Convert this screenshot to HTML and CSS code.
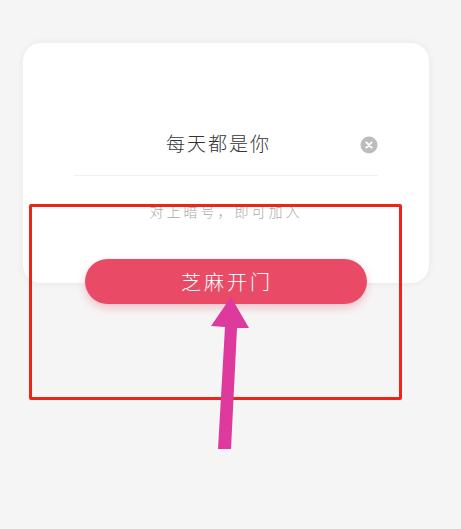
FILE: index.html
```html
<!DOCTYPE html>
<html>
  <head>
    <title>芝麻开门</title>
    <link rel="stylesheet" href="styles.css">
  </head>
  <body>
    <div class="card">
      <div class="code-row">
        <span class="code">每天都是你</span>
        <span class="clear">
          <svg viewBox="0 0 18 18" width="18" height="18">
            <circle cx="9" cy="9" r="8.5" fill="#bcbcbc"/>
            <path d="M6.3 6.3l5.4 5.4M11.7 6.3l-5.4 5.4" stroke="#fff" stroke-width="1.8" stroke-linecap="round"/>
          </svg>
        </span>
      </div>
      <p class="hint">对上暗号，即可加入</p>
      <button class="open">芝麻开门</button>
    </div>

    <!-- annotation drawn over the screenshot -->
    <div class="mark-box"></div>
    <svg class="mark-arrow" viewBox="0 0 461 529" width="461" height="529">
      <polygon points="231,297 249,328 237,328 231,449 218,449 225,327 211,326" fill="#de399c"/>
    </svg>
  </body>
</html>
```

FILE: styles.css
```css
html,
body {
  height: 100%;
}
body {
  position: relative;
  margin: 0;
  padding: 43px 32px 0 23px;
  box-sizing: border-box;
  height: 529px;
  overflow: hidden;
  background: #f5f5f5;
  font-family: "Noto Sans CJK SC", "Liberation Sans", sans-serif;
  font-weight: 300;
}
.card {
  display: flex;
  flex-direction: column;
  height: 240px;
  box-sizing: border-box;
  padding-top: 86px;
  background: #fff;
  border-radius: 18px;
  box-shadow: 0 0 8px rgba(0, 0, 0, 0.06);
}
.code-row {
  position: relative;
  display: flex;
  justify-content: center;
  align-items: center;
  height: 34px;
  margin: 0 51px;
  padding-bottom: 19px;
  border-bottom: 1px solid #f0f0f0;
}
.code {
  margin-right: 15px;
  font-size: 19px;
  letter-spacing: 2px;
  color: #333;
}
.clear {
  position: absolute;
  right: 0;
  top: 6px;
  height: 18px;
}
.hint {
  margin: 25px 0 0;
  text-align: center;
  font-size: 14px;
  line-height: 20px;
  letter-spacing: 3px;
  color: #a8a8a8;
}
.open {
  display: block;
  flex: none;
  width: 282px;
  height: 45px;
  margin: 38px 0 0 62px;
  padding: 0 0 0 2px;
  border: none;
  border-radius: 23px;
  background: #e94b66;
  box-shadow: 0 4px 8px rgba(233, 75, 102, 0.3);
  color: #fff;
  font-family: inherit;
  font-weight: 300;
  font-size: 20px;
  letter-spacing: 3px;
}
.mark-box {
  position: absolute;
  left: 29px;
  top: 204px;
  width: 373px;
  height: 196px;
  box-sizing: border-box;
  border: 3px solid #ee2419;
  border-radius: 2px;
}
.mark-arrow {
  position: absolute;
  left: 0;
  top: 0;
}
```
